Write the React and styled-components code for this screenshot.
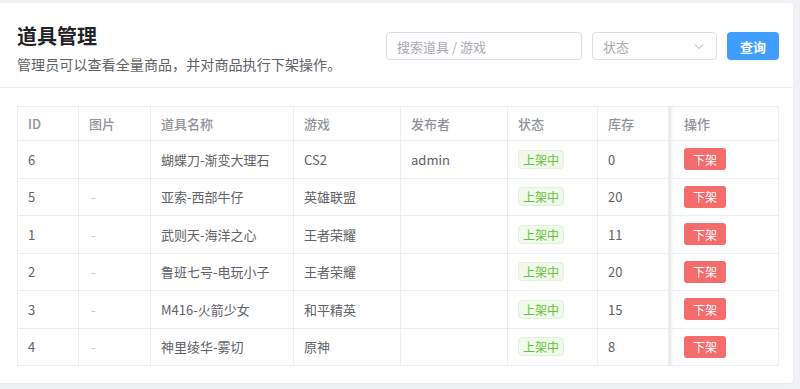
import styled, { createGlobalStyle } from 'styled-components';

const GlobalStyle = createGlobalStyle`
  html, body {
    margin: 0;
    padding: 0;
    background: #f0f2f5;
    font-family: "Noto Sans CJK SC", "Noto Sans", sans-serif;
  }
  * { box-sizing: border-box; }
`;

const Page = styled.div`
  padding-top: 3px;
  width: 800px;
  height: 389px;
`;

const Card = styled.div`
  width: 793px;
  height: 380px;
  background: #fff;
  border-radius: 0 4px 4px 0;
  box-shadow: 0 1px 3px rgba(0, 0, 0, 0.04);
`;

const Head = styled.header`
  display: flex;
  justify-content: space-between;
  align-items: flex-start;
  height: 85px;
  padding: 19px 14px 0 17px;
  border-bottom: 1px solid #ebeef5;
`;

const Title = styled.h1`
  margin: 0;
  font-size: 20px;
  line-height: 28px;
  font-weight: 700;
  color: #1f2329;
`;

const Sub = styled.p`
  margin: 4px 0 0;
  font-size: 14px;
  line-height: 20px;
  letter-spacing: 0.1px;
  color: #606266;
`;

const Toolbar = styled.div`
  display: flex;
  gap: 10px;
  margin-top: 10px;
`;

const Field = styled.div`
  display: flex;
  align-items: center;
  justify-content: space-between;
  width: ${(p) => p.$w}px;
  height: 28px;
  padding: 0 11px 0 10px;
  border: 1px solid #dcdfe6;
  border-radius: 4px;
  font-size: 13px;
  color: #a8abb2;
`;

const QueryButton = styled.button`
  width: 52px;
  height: 28px;
  border: none;
  border-radius: 4px;
  background: #409eff;
  color: #fff;
  font-family: inherit;
  font-size: 13px;
  font-weight: 600;
`;

const Body = styled.section`
  padding: 18px 14px 0 17px;
`;

const Table = styled.div`
  width: 762px;
  border: 1px solid #ebeef5;
  border-bottom: none;
  font-size: 13px;
`;

const Row = styled.div`
  display: grid;
  grid-template-columns: 61px 72px 143px 107px 107px 90px 71px 109px;
  height: ${(p) => (p.$head ? '34px' : '37.5px')};
  color: ${(p) => (p.$head ? '#909399' : '#606266')};
  font-weight: ${(p) => (p.$head ? 500 : 400)};
`;

const Cell = styled.div`
  display: flex;
  align-items: center;
  padding-left: 10px;
  border-bottom: 1px solid #ebeef5;
  border-right: 1px solid #ebeef5;
  white-space: nowrap;
`;

const FixedCell = styled(Cell)`
  padding-left: 15px;
  border-right: none;
  background: linear-gradient(to right, #e6e8eb 0, #f4f5f7 3px, #fff 4px);
`;

const Dash = styled.span`
  color: #c0c4cc;
  padding-left: 2px;
`;

const Tag = styled.span`
  display: inline-flex;
  align-items: center;
  justify-content: center;
  width: 46px;
  height: 19px;
  border: 1px solid #e1f3d8;
  border-radius: 4px;
  background: #f0f9eb;
  color: #67c23a;
  font-size: 12px;
`;

const OffButton = styled.button`
  width: 42px;
  height: 22px;
  border: none;
  border-radius: 3px;
  background: #f56c6c;
  color: #fff;
  font-family: inherit;
  font-size: 12px;
  padding: 0;
`;

const Chevron = () => (
  <svg width="12" height="12" viewBox="0 0 12 12" fill="none">
    <path d="M2 4.5 6 8.5 10 4.5" stroke="#a8abb2" strokeWidth="1" />
  </svg>
);

const heads = ['ID', '图片', '道具名称', '游戏', '发布者', '状态', '库存'];

const items = [
  { id: 6, img: false, name: '蝴蝶刀-渐变大理石', game: 'CS2', owner: 'admin', stock: 0 },
  { id: 5, img: true, name: '亚索-西部牛仔', game: '英雄联盟', owner: '', stock: 20 },
  { id: 1, img: true, name: '武则天-海洋之心', game: '王者荣耀', owner: '', stock: 11 },
  { id: 2, img: true, name: '鲁班七号-电玩小子', game: '王者荣耀', owner: '', stock: 20 },
  { id: 3, img: true, name: 'M416-火箭少女', game: '和平精英', owner: '', stock: 15 },
  { id: 4, img: true, name: '神里绫华-雾切', game: '原神', owner: '', stock: 8 },
];

export default function App() {
  return (
    <Page>
      <GlobalStyle />
      <Card>
        <Head>
          <div>
            <Title>道具管理</Title>
            <Sub>管理员可以查看全量商品，并对商品执行下架操作。</Sub>
          </div>
          <Toolbar>
            <Field $w={196}>搜索道具 / 游戏</Field>
            <Field $w={125}>
              状态
              <Chevron />
            </Field>
            <QueryButton>查询</QueryButton>
          </Toolbar>
        </Head>
        <Body>
          <Table role="table">
            <Row $head role="row">
              {heads.map((h) => (
                <Cell key={h}>{h}</Cell>
              ))}
              <FixedCell>操作</FixedCell>
            </Row>
            {items.map((it) => (
              <Row key={it.id} role="row">
                <Cell>{it.id}</Cell>
                <Cell>{it.img && <Dash>-</Dash>}</Cell>
                <Cell>{it.name}</Cell>
                <Cell>{it.game}</Cell>
                <Cell>{it.owner}</Cell>
                <Cell>
                  <Tag>上架中</Tag>
                </Cell>
                <Cell>{it.stock}</Cell>
                <FixedCell>
                  <OffButton>下架</OffButton>
                </FixedCell>
              </Row>
            ))}
          </Table>
        </Body>
      </Card>
    </Page>
  );
}
